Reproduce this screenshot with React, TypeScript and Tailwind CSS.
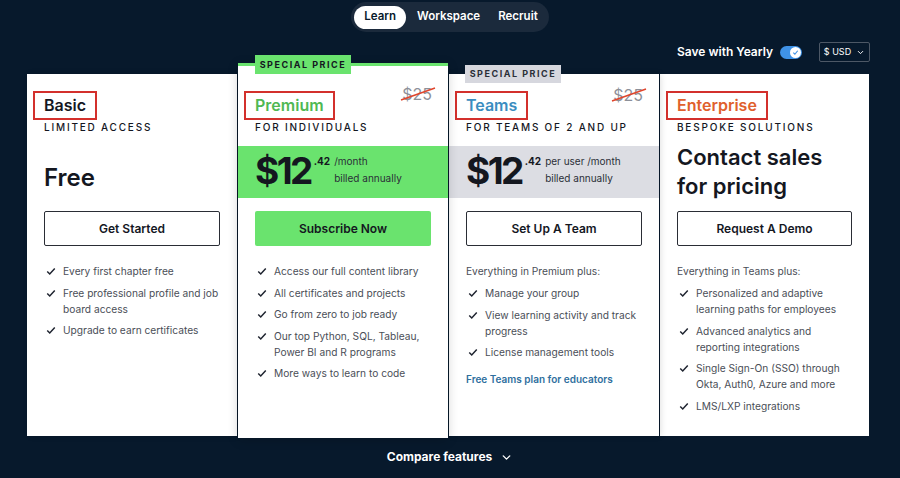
import { ChevronDown } from "lucide-react";

const font = { fontFamily: "Inter, 'Noto Sans', sans-serif" };

function Check() {
    return (
        <svg width="10" height="10" viewBox="0 0 12 12" className="mt-[3px] shrink-0">
            <path d="M1.5 6.5 L4.5 9.5 L10.5 3" fill="none" stroke="#1f2430" strokeWidth="1.8" />
        </svg>
    );
}

function Features({ items, lead }: { items: string[]; lead?: string }) {
    return (
        <div className="px-[17px] pt-[17px] text-[10.2px] leading-[16px] text-[#4a4e57]">
            {lead && <p className="mb-[6px]">{lead}</p>}
            <ul className="flex flex-col gap-[5.5px]">
                {items.map((t) => (
                    <li key={t} className="flex gap-[7px] pl-[2px]">
                        <Check />
                        <span>{t}</span>
                    </li>
                ))}
            </ul>
        </div>
    );
}

function Heading({ title, color, sub }: { title: string; color: string; sub: string }) {
    return (
        <div className="px-[17px]">
            <div className="h-[30px] flex items-center">
                <span className={`-ml-[11px] border-2 border-[#d3302c] px-[9px] h-[29px] flex items-center text-[16px] font-semibold ${color}`}>
                    {title}
                </span>
            </div>
            <div className="text-[10px] leading-[15px] tracking-[0.18em] font-medium text-[#14171f]">{sub}</div>
        </div>
    );
}

function Struck({ top }: { top: string }) {
    return (
        <div className={`absolute right-[16px] ${top} text-[16px] leading-[22px] text-[#8d9099]`}>
            $25
            <svg className="absolute -left-[2px] top-[3px]" width="36" height="16" viewBox="0 0 36 16">
                <line x1="1" y1="14" x2="35" y2="2" stroke="#e0452c" strokeWidth="1.6" />
            </svg>
        </div>
    );
}

function Price({ per }: { per: string }) {
    return (
        <div className="flex items-start">
            <span className="text-[37px] font-bold leading-none tracking-[-0.07em] text-[#14171f]">$12</span>
            <span className="ml-[3px] mt-[2px] text-[10px] font-bold text-[#14171f]">.42</span>
            <div className="ml-[4px] mt-[1px] flex flex-col text-[10px] leading-[17px] text-[#2b2f38]">
                <span>{per}</span>
                <span>billed annually</span>
            </div>
        </div>
    );
}

function Button({ label, green }: { label: string; green?: boolean }) {
    return (
        <div className="px-[17px] pt-[13px]">
            <button
                className={`w-full h-[35px] rounded-[2px] text-[12px] font-semibold text-[#14171f] ${green ? "bg-[#6ae36e]" : "border border-[#2a2d35] bg-white"}`}
            >
                {label}
            </button>
        </div>
    );
}

export default function App() {
    return (
        <div className="w-[900px] h-[478px] bg-[#07192c] overflow-hidden relative" style={font}>
            {/* tabs */}
            <div className="flex justify-center pt-[2px]">
                <div className="flex items-center h-[30px] rounded-full bg-[#1b2a3c] px-[3px] text-[11.5px] font-semibold text-white">
                    <span className="h-[23px] px-[10px] flex items-center rounded-full bg-white text-[#07192c]">Learn</span>
                    <span className="px-[11px]">Workspace</span>
                    <span className="pl-[7px] pr-[8px]">Recruit</span>
                </div>
            </div>

            {/* yearly toggle */}
            <div className="flex justify-end items-center pr-[30px] mt-[10px] h-[20px]">
                <span className="text-[12px] font-semibold text-white">Save with Yearly</span>
                <div className="ml-[7px] w-[22px] h-[13px] rounded-full bg-[#3f92e6] flex items-center justify-end pr-[1px]">
                    <div className="w-[11px] h-[11px] rounded-full bg-white flex items-center justify-center">
                        <svg width="7" height="7" viewBox="0 0 8 8">
                            <path d="M1.5 4.2 L3.3 6 L6.5 2" fill="none" stroke="#3f92e6" strokeWidth="1.3" />
                        </svg>
                    </div>
                </div>
                <div className="ml-[17px] h-[20px] w-[51px] border border-[#4d5866] rounded-[2px] flex items-center justify-center gap-[5px] text-[9px] text-white">
                    $ USD <ChevronDown size={9} strokeWidth={2.5} />
                </div>
            </div>

            {/* cards */}
            <div className="flex mt-[12px] ml-[27px] h-[362px] gap-[1px]">
                {/* Basic */}
                <div className="w-[210px] bg-white shadow-[2px_0_6px_rgba(0,0,0,0.12)] pt-[16px]">
                    <Heading title="Basic" color="text-[#14171f]" sub="LIMITED ACCESS" />
                    <div className="h-[52px] mt-[11px] px-[17px] pt-[17px] text-[24px] leading-[30px] font-semibold text-[#14171f]">Free</div>
                    <Button label="Get Started" />
                    <Features items={["Every first chapter free", "Free professional profile and job board access", "Upgrade to earn certificates"]} />
                </div>

                {/* Premium */}
                <div className="relative w-[210px] bg-white -mt-[11px] h-[375px] border-t-[3px] border-[#6ae36e] shadow-[0_2px_10px_rgba(0,0,0,0.18)] z-10 pt-[24px]">
                    <div className="absolute -top-[11px] left-[17px] h-[19px] w-[96px] bg-[#6ae36e] flex items-center justify-center text-[9px] font-bold tracking-[0.17em] text-[#14171f]">
                        SPECIAL PRICE
                    </div>
                    <Struck top="top-[17px]" />
                    <Heading title="Premium" color="text-[#4fb853]" sub="FOR INDIVIDUALS" />
                    <div className="h-[52px] mt-[11px] px-[17px] pt-[6px] bg-[#6ae36e]">
                        <Price per="/month" />
                    </div>
                    <Button label="Subscribe Now" green />
                    <Features items={["Access our full content library", "All certificates and projects", "Go from zero to job ready", "Our top Python, SQL, Tableau, Power BI and R programs", "More ways to learn to code"]} />
                </div>

                {/* Teams */}
                <div className="relative w-[210px] bg-white shadow-[2px_0_6px_rgba(0,0,0,0.12)] pt-[16px]">
                    <div className="absolute -top-[9px] left-[16px] h-[18px] w-[96px] bg-[#d6d7de] flex items-center justify-center text-[9px] font-bold tracking-[0.17em] text-[#2b2f38]">
                        SPECIAL PRICE
                    </div>
                    <Struck top="top-[10px]" />
                    <Heading title="Teams" color="text-[#3a8dc0]" sub="FOR TEAMS OF 2 AND UP" />
                    <div className="h-[52px] mt-[11px] px-[17px] pt-[6px] bg-[#dcdde3]">
                        <Price per="per user /month" />
                    </div>
                    <Button label="Set Up A Team" />
                    <Features lead="Everything in Premium plus:" items={["Manage your group", "View learning activity and track progress", "License management tools"]} />
                    <div className="px-[17px] mt-[12px] text-[10px] font-semibold text-[#2f6f9e]">Free Teams plan for educators</div>
                </div>

                {/* Enterprise */}
                <div className="w-[209px] bg-white pt-[16px]">
                    <Heading title="Enterprise" color="text-[#e0602c]" sub="BESPOKE SOLUTIONS" />
                    <div className="h-[52px] mt-[11px] px-[17px] flex items-center text-[22px] leading-[29px] font-semibold text-[#14171f]">
                        Contact sales<br />for pricing
                    </div>
                    <Button label="Request A Demo" />
                    <Features lead="Everything in Teams plus:" items={["Personalized and adaptive learning paths for employees", "Advanced analytics and reporting integrations", "Single Sign-On (SSO) through Okta, Auth0, Azure and more", "LMS/LXP integrations"]} />
                </div>
            </div>

            {/* compare */}
            <div className="flex justify-center items-center gap-[8px] mt-[12px] text-[12px] font-bold text-white">
                Compare features <ChevronDown size={13} strokeWidth={2.5} />
            </div>
        </div>
    );
}
